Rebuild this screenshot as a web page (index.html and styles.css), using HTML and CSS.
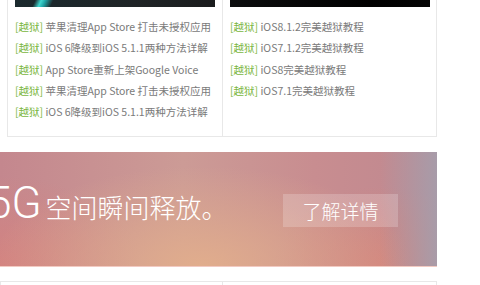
FILE: index.html
```html
<!DOCTYPE html>
<html lang="zh-CN">
<head>
    <meta charset="UTF-8">
    <meta name="viewport" content="width=device-width, initial-scale=1.0">
    <title>越狱专区</title>
    <link rel="stylesheet" href="styles.css">
</head>
<body>
    <div class="page">
        <div class="news">
            <div class="col">
                <div class="thumb thumb-streak"></div>
                <ul class="list">
                    <li><a href="#"><span class="tag">[越狱]</span> 苹果清理App Store 打击未授权应用</a></li>
                    <li><a href="#"><span class="tag">[越狱]</span> iOS 6降级到iOS 5.1.1两种方法详解</a></li>
                    <li><a href="#"><span class="tag">[越狱]</span> App Store重新上架Google Voice</a></li>
                    <li><a href="#"><span class="tag">[越狱]</span> 苹果清理App Store 打击未授权应用</a></li>
                    <li><a href="#"><span class="tag">[越狱]</span> iOS 6降级到iOS 5.1.1两种方法详解</a></li>
                </ul>
            </div>
            <div class="col">
                <div class="thumb thumb-dark"></div>
                <ul class="list">
                    <li><a href="#"><span class="tag">[越狱]</span> iOS8.1.2完美越狱教程</a></li>
                    <li><a href="#"><span class="tag">[越狱]</span> iOS7.1.2完美越狱教程</a></li>
                    <li><a href="#"><span class="tag">[越狱]</span> iOS8完美越狱教程</a></li>
                    <li><a href="#"><span class="tag">[越狱]</span> iOS7.1完美越狱教程</a></li>
                </ul>
            </div>
        </div>

        <div class="banner">
            <div class="slogan"><span class="big">5G</span>空间瞬间释放。</div>
            <a class="more" href="#">了解详情</a>
        </div>

        <div class="news news-next">
            <div class="col"></div>
            <div class="col"></div>
        </div>
    </div>
</body>
</html>
```

FILE: styles.css
```css
body {
    margin: 0;
    background: #fff;
    font-family: "Noto Sans CJK SC", "Noto Sans", sans-serif;
    overflow: hidden;
}
.page {
    width: 437px;
}
.news {
    display: flex;
    margin-left: 7px;
    height: 136px;
    border: 1px solid #e8e8e8;
    border-top: none;
}
.col {
    width: 214px;
    padding: 0 6px 0 7px;
    box-sizing: border-box;
}
.col + .col {
    border-left: 1px solid #e8e8e8;
}
.thumb {
    width: 200px;
    height: 7px;
}
.thumb-streak {
    background:
        linear-gradient(115deg, transparent 10%, #3fd6cf 13%, #20a7a8 15%, transparent 19%),
        linear-gradient(to right, #1b2a2e, #1f2426 60%, #1a1c1d);
}
.thumb-dark {
    background: linear-gradient(to right, #0c0d0e, #000 70%, #050505);
}
.list {
    list-style: none;
    margin: 9px 0 0;
    padding: 0;
    font-size: 10.5px;
    line-height: 21.3px;
    white-space: nowrap;
}
.list a {
    color: #7a7a7a;
    text-decoration: none;
}
.tag {
    color: #7ab640;
}
.banner {
    display: flex;
    align-items: flex-start;
    height: 114px;
    margin-top: 15px;
    border-bottom: 1px solid #f2cac2;
    color: #fff;
    background:
        linear-gradient(to right, rgba(165, 158, 172, 0) 87%, rgba(165, 158, 172, 0.9) 100%),
        radial-gradient(ellipse 210px 100px at 46% 100%, rgba(226, 174, 140, 0.95), rgba(226, 174, 140, 0)),
        radial-gradient(ellipse 110px 80px at 88% 100%, rgba(212, 132, 124, 0.9), rgba(212, 132, 124, 0)),
        radial-gradient(ellipse 140px 90px at 0% 100%, rgba(214, 130, 126, 0.85), rgba(214, 130, 126, 0)),
        linear-gradient(to right, #c4878e 0%, #cc9b96 42%, #c88d90 72%, #bf8890 100%);
}
.slogan {
    margin: 29px 0 0 -13px;
    font-size: 26px;
    font-weight: 300;
    line-height: 44px;
    white-space: nowrap;
}
.big {
    font-family: Roboto, "Noto Sans", sans-serif;
    font-size: 44px;
    font-weight: 300;
    margin-right: 4px;
}
.more {
    margin: 42px 39px 0 auto;
    width: 115px;
    height: 33px;
    line-height: 33px;
    text-align: center;
    font-size: 19px;
    font-weight: 300;
    color: #fff;
    text-decoration: none;
    background: rgba(255, 255, 255, 0.2);
}
.news-next {
    margin: 14px 0 0;
    border-top: 1px solid #e8e8e8;
    height: 40px;
}
.news-next .col {
    width: 222px;
}
.news-next .col + .col {
    width: 215px;
}
```
